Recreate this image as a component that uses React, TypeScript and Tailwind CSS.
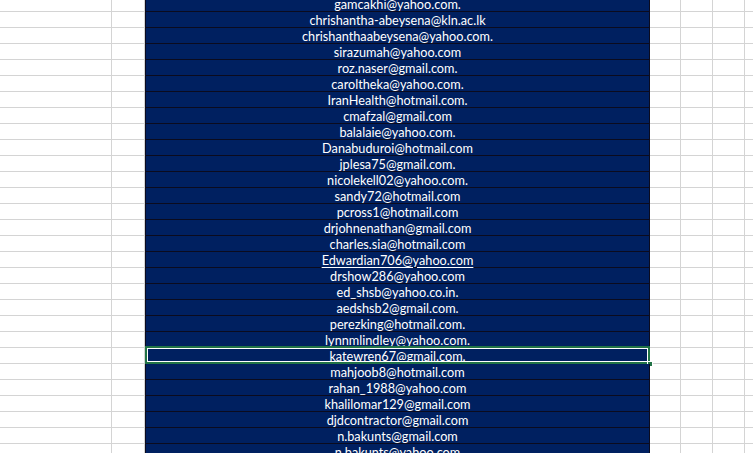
import React from 'react';

const emails = [
  'gamcakhi@yahoo.com.',
  'chrishantha-abeysena@kln.ac.lk',
  'chrishanthaabeysena@yahoo.com.',
  'sirazumah@yahoo.com',
  'roz.naser@gmail.com.',
  'caroltheka@yahoo.com.',
  'IranHealth@hotmail.com.',
  'cmafzal@gmail.com',
  'balalaie@yahoo.com.',
  'Danabuduroi@hotmail.com',
  'jplesa75@gmail.com.',
  'nicolekell02@yahoo.com.',
  'sandy72@hotmail.com',
  'pcross1@hotmail.com',
  'drjohnenathan@gmail.com',
  'charles.sia@hotmail.com',
  'Edwardian706@yahoo.com',
  'drshow286@yahoo.com',
  'ed_shsb@yahoo.co.in.',
  'aedshsb2@gmail.com.',
  'perezking@hotmail.com.',
  'lynnmlindley@yahoo.com.',
  'katewren67@gmail.com.',
  'mahjoob8@hotmail.com',
  'rahan_1988@yahoo.com',
  'khalilomar129@gmail.com',
  'djdcontractor@gmail.com',
  'n.bakunts@gmail.com',
  'n.bakunts@yahoo.com',
];

const SELECTED = 22;
const LINKED = 16;

const App: React.FC = () => {
  return (
    <div className="w-[753px] h-[453px] overflow-hidden bg-white" style={{ fontFamily: 'Lato, "Open Sans", sans-serif' }}>
      <div className="-mt-[4px]">
        {emails.map((email, i) => (
          <div key={i} className="flex h-[16px]">
            <div className="w-[112px] shrink-0 border-r border-b border-[#d4d4d4]" />
            <div className="w-[33px] shrink-0 border-r border-b border-[#d4d4d4]" />
            <div className="relative w-[505px] shrink-0 bg-[#002060] border-x border-b border-[#0b0b1e] flex items-center justify-center pt-[1px] text-white text-[12.7px] leading-none">
              <span className={i === LINKED ? 'underline underline-offset-2' : ''}>{email}</span>
              {i === SELECTED && (
                <>
                  <div className="absolute -left-[1px] -right-[1px] -top-[2px] -bottom-[1px] border-2 border-[#217346]">
                    <div className="w-full h-full border border-white" />
                  </div>
                  <div className="absolute -right-[4px] -bottom-[4px] w-[6px] h-[6px] bg-[#217346] border border-white" />
                </>
              )}
            </div>
            <div className="w-[31px] shrink-0 border-r border-b border-[#d4d4d4]" />
            <div className="w-[32px] shrink-0 border-r border-b border-[#d4d4d4]" />
            <div className="w-[32px] shrink-0 border-r border-b border-[#d4d4d4]" />
            <div className="flex-1 border-b border-[#d4d4d4]" />
          </div>
        ))}
      </div>
    </div>
  );
};

export default App;
